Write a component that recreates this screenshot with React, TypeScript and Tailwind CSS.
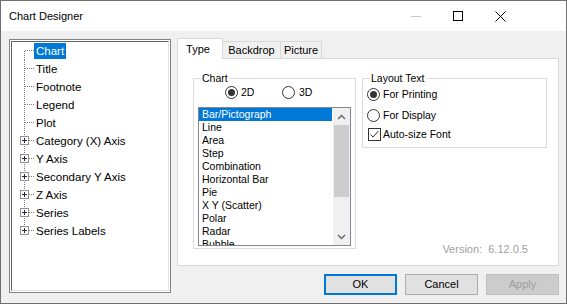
import React from "react";

const treeItems = [
  { label: "Chart", expandable: false, selected: true },
  { label: "Title", expandable: false },
  { label: "Footnote", expandable: false },
  { label: "Legend", expandable: false },
  { label: "Plot", expandable: false },
  { label: "Category (X) Axis", expandable: true },
  { label: "Y Axis", expandable: true },
  { label: "Secondary Y Axis", expandable: true },
  { label: "Z Axis", expandable: true },
  { label: "Series", expandable: true },
  { label: "Series Labels", expandable: true },
];

const chartTypes = [
  "Bar/Pictograph",
  "Line",
  "Area",
  "Step",
  "Combination",
  "Horizontal Bar",
  "Pie",
  "X Y (Scatter)",
  "Polar",
  "Radar",
  "Bubble",
];

function TreeGutter({ first, last, expandable }: { first: boolean; last: boolean; expandable: boolean }) {
  return (
    <svg width="22" height="18" className="shrink-0" shapeRendering="crispEdges">
      <line x1="12.5" y1={first ? 9 : 0} x2="12.5" y2={last ? 9 : 18} stroke="#7a7a7a" strokeDasharray="1 1" />
      <line x1="13" y1="8.5" x2="22" y2="8.5" stroke="#7a7a7a" strokeDasharray="1 1" />
      {expandable && (
        <>
          <rect x="8.5" y="4.5" width="8" height="8" fill="#ffffff" stroke="#919191" />
          <line x1="10" y1="8.5" x2="15" y2="8.5" stroke="#1c2a4a" />
          <line x1="12.5" y1="6" x2="12.5" y2="11" stroke="#1c2a4a" />
        </>
      )}
    </svg>
  );
}

function Radio({ checked }: { checked?: boolean }) {
  return (
    <span className="w-[13px] h-[13px] rounded-full border border-[#333333] bg-white flex items-center justify-center shrink-0">
      {checked && <span className="w-[7px] h-[7px] rounded-full bg-[#333333]" />}
    </span>
  );
}

function Chevron({ up }: { up?: boolean }) {
  return (
    <svg width="9" height="6" viewBox="0 0 9 6">
      <polyline
        points={up ? "1,5 4.5,1.5 8,5" : "1,1 4.5,4.5 8,1"}
        fill="none"
        stroke="#606060"
        strokeWidth="1.3"
      />
    </svg>
  );
}

export default function App() {
  return (
    <div className="w-[567px] h-[304px] flex flex-col border border-[#6f6f6f] bg-[#f0f0f0] text-black overflow-hidden font-['Liberation_Sans',Arial,sans-serif]">
      {/* title bar */}
      <div className="h-[30px] bg-white flex items-center pl-[8px] shrink-0">
        <span className="text-[11px]">Chart Designer</span>
        <div className="ml-auto mr-[45px] flex h-full">
          <div className="w-[42px] flex items-center justify-center">
            <span className="w-[10px] h-px bg-[#c6c6c6]" />
          </div>
          <div className="w-[42px] flex items-center justify-center">
            <span className="w-[10px] h-[10px] border border-black" />
          </div>
          <div className="w-[42px] flex items-center justify-center">
            <svg width="11" height="11" viewBox="0 0 11 11">
              <path d="M0.5 0.5 L10.5 10.5 M10.5 0.5 L0.5 10.5" stroke="#000" strokeWidth="1" />
            </svg>
          </div>
        </div>
      </div>

      {/* body */}
      <div className="flex-1 flex pl-[8px] pt-[7px]">
        {/* tree */}
        <div className="mt-[1px] w-[162px] h-[254px] border border-[#838383] bg-white p-[1px]">
          <div className="w-full h-full border-l border-t border-[#646464] border-r-[#e3e3e3] border-b-[#e3e3e3] border-r border-b pt-[0px] text-[11.5px]">
            {treeItems.map((item, i) => (
              <div key={item.label} className="h-[18px] flex items-center">
                <TreeGutter first={i === 0} last={i === treeItems.length - 1} expandable={item.expandable} />
                <span
                  className={
                    "h-[16px] leading-[16px] px-[2px] whitespace-nowrap " +
                    (item.selected ? "bg-[#0078d7] text-white" : "")
                  }
                >
                  {item.label}
                </span>
              </div>
            ))}
          </div>
        </div>

        {/* right column */}
        <div className="ml-[6px] w-[382px] flex flex-col">
          {/* tabs */}
          <div className="h-[20px] flex items-start text-[11px]">
            <div className="relative z-10 w-[46px] h-[21px] bg-white border border-b-0 border-[#d9d9d9] flex items-center justify-center pr-[4px]">
              Type
            </div>
            <div className="mt-[3px] w-[58px] h-[17px] border-t border-r border-[#d9d9d9] flex items-center justify-center">
              Backdrop
            </div>
            <div className="mt-[3px] w-[41px] h-[17px] border-t border-r border-[#d9d9d9] flex items-center justify-center">
              Picture
            </div>
          </div>

          {/* panel */}
          <div className="h-[208px] bg-white border border-[#d9d9d9] flex items-start pl-[15px] pt-[13px] gap-[6px] text-[10.5px]">
            <fieldset className="w-[163px] h-[177px] border border-[#dcdcdc]">
              <legend className="ml-[7px] px-[1px] leading-[12px]">Chart</legend>
              <div className="mt-[2px] ml-[31px] h-[13px] flex items-center">
                <div className="w-[57px] flex items-center gap-[3px]">
                  <Radio checked />
                  <span>2D</span>
                </div>
                <div className="flex items-center gap-[4px]">
                  <Radio />
                  <span>3D</span>
                </div>
              </div>
              <div className="mt-[8px] ml-[4px] w-[153px] h-[139px] border border-[#828790] flex">
                <div className="flex-1 overflow-hidden">
                  {chartTypes.map((t, i) => (
                    <div
                      key={t}
                      className={
                        "h-[13px] leading-[13px] pl-[3px] mr-[1px] whitespace-nowrap " +
                        (i === 0 ? "bg-[#0078d7] text-white" : "")
                      }
                    >
                      {t}
                    </div>
                  ))}
                </div>
                <div className="w-[17px] bg-[#f0f0f0] flex flex-col">
                  <div className="h-[17px] flex items-center justify-center">
                    <Chevron up />
                  </div>
                  <div className="mx-[1px] h-[72px] bg-[#cdcdcd]" />
                  <div className="mt-auto h-[17px] flex items-center justify-center">
                    <Chevron />
                  </div>
                </div>
              </div>
            </fieldset>

            <div className="w-[185px] flex flex-col">
              <fieldset className="w-[185px] h-[76px] border border-[#dcdcdc]">
                <legend className="ml-[7px] px-[1px] leading-[12px]">Layout Text</legend>
                <div className="mt-[4px] ml-[4px] h-[13px] flex items-center gap-[3px]">
                  <Radio checked />
                  <span>For Printing</span>
                </div>
                <div className="mt-[8px] ml-[4px] h-[13px] flex items-center gap-[3px]">
                  <Radio />
                  <span>For Display</span>
                </div>
                <div className="mt-[6px] ml-[5px] h-[13px] flex items-center gap-[2px]">
                  <span className="w-[13px] h-[13px] border border-[#333333] bg-white flex items-center justify-center">
                    <svg width="11" height="11" viewBox="0 0 11 11">
                      <polyline points="1.5,5.5 4,8 9.5,2" fill="none" stroke="#333333" strokeWidth="1" />
                    </svg>
                  </span>
                  <span>Auto-size Font</span>
                </div>
              </fieldset>
              <span className="mt-[95px] self-end mr-[19px] text-[11px] leading-[12px] text-[#a0a0a0] whitespace-pre">
                Version:  6.12.0.5
              </span>
            </div>
          </div>

          {/* buttons */}
          <div className="mt-[8px] flex justify-end gap-[8px] text-[11px]">
            <button className="w-[73px] h-[21px] border-2 border-[#0078d7] bg-[#e1e1e1] flex items-center justify-center">
              OK
            </button>
            <button className="w-[73px] h-[21px] border border-[#adadad] bg-[#e1e1e1] flex items-center justify-center">
              Cancel
            </button>
            <button className="w-[73px] h-[21px] border border-[#bfbfbf] bg-[#cccccc] text-[#9d9d9d] flex items-center justify-center">
              Apply
            </button>
          </div>
        </div>
      </div>
    </div>
  );
}
